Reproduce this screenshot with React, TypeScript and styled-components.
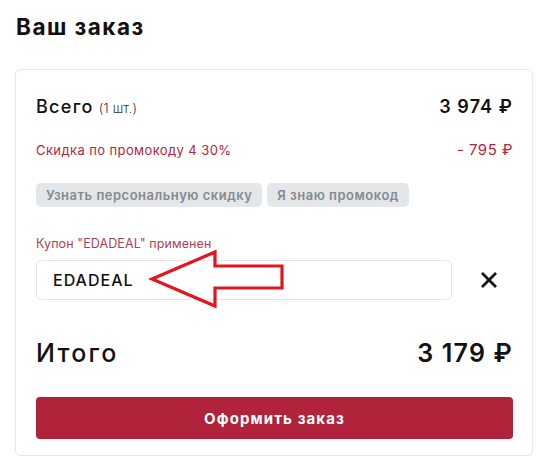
import React from "react";
import styled, { createGlobalStyle } from "styled-components";

const Global = createGlobalStyle`
  html, body { margin: 0; padding: 0; background: #ffffff; }
  body { font-family: Inter, "Noto Sans", "Liberation Sans", sans-serif; color: #111; }
  * { box-sizing: border-box; }
`;

const Page = styled.div`
  width: 550px;
  padding: 14px 17px 0 15px;
  display: flex;
  flex-direction: column;
`;

const Title = styled.h1`
  margin: 0 0 0 1px;
  font-size: 22.5px;
  line-height: 26px;
  font-weight: 750;
  letter-spacing: 1.5px;
  color: #111;
`;

const Card = styled.section`
  margin-top: 29px;
  width: 518px;
  border: 1px solid #e7e7e7;
  border-radius: 6px;
  box-shadow: 0 1px 3px rgba(0, 0, 0, 0.04);
  padding: 25px 19px 16px 20px;
  display: flex;
  flex-direction: column;
`;

const Row = styled.div<{ $mt?: number }>`
  display: flex;
  justify-content: space-between;
  align-items: baseline;
  margin-top: ${(p) => p.$mt ?? 0}px;
`;

const Label = styled.span`
  font-size: 18px;
  line-height: 24px;
  font-weight: 500;
  letter-spacing: 1.3px;
`;

const Count = styled.span`
  font-size: 13px;
  font-weight: 300;
  color: #333;
  letter-spacing: 0.2px;
  margin-left: 5px;
`;

const Amount = styled.span`
  font-size: 18px;
  line-height: 24px;
  font-weight: 600;
  letter-spacing: 1.1px;
`;

const Discount = styled.span`
  font-size: 13px;
  line-height: 18px;
  color: #b5253c;
  letter-spacing: 0.4px;
`;

const DiscountAmount = styled.span`
  font-size: 15px;
  line-height: 18px;
  color: #b5253c;
  letter-spacing: 0.5px;
`;

const Chips = styled.div`
  display: flex;
  gap: 5px;
  margin-top: 24px;
`;

const Chip = styled.button`
  height: 24px;
  padding: 0 10px;
  border: none;
  border-radius: 5px;
  background: #e3e7ea;
  color: #858a8f;
  font-family: inherit;
  font-size: 13px;
  font-weight: 600;
  letter-spacing: 0.5px;
  cursor: pointer;
`;

const CouponLabel = styled.div`
  margin-top: 29px;
  font-size: 12.5px;
  line-height: 16px;
  color: #a94457;
  letter-spacing: 0.1px;
`;

const CouponRow = styled.div`
  position: relative;
  display: flex;
  align-items: center;
  margin-top: 8px;
`;

const CouponInput = styled.div`
  flex: 1;
  height: 40px;
  border: 1px solid #e5e5e5;
  border-radius: 5px;
  padding: 0 16px;
  display: flex;
  align-items: center;
  font-size: 16px;
  font-weight: 500;
  letter-spacing: 1px;
  color: #111;
`;

const Close = styled.button`
  width: 48px;
  height: 40px;
  margin-left: 13px;
  border: none;
  background: none;
  padding: 0;
  display: flex;
  align-items: center;
  justify-content: center;
  cursor: pointer;
`;

const Arrow = styled.svg`
  position: absolute;
  left: 112px;
  top: -12px;
  pointer-events: none;
`;

const TotalLabel = styled.span`
  font-size: 25px;
  line-height: 30px;
  font-weight: 500;
  letter-spacing: 2.2px;
`;

const TotalAmount = styled.span`
  font-size: 25px;
  line-height: 30px;
  font-weight: 600;
  letter-spacing: 1.2px;
`;

const Submit = styled.button`
  margin-top: 29px;
  height: 42px;
  width: 100%;
  border: none;
  border-radius: 4px;
  background: #b0233a;
  color: #fff;
  font-family: inherit;
  font-size: 15px;
  font-weight: 700;
  letter-spacing: 1.1px;
  cursor: pointer;
`;

export default function App() {
  return (
    <>
      <Global />
      <Page>
        <Title>Ваш заказ</Title>
        <Card>
          <Row>
            <Label>
              Всего<Count>(1 шт.)</Count>
            </Label>
            <Amount>3 974 ₽</Amount>
          </Row>
          <Row $mt={21}>
            <Discount>Скидка по промокоду 4 30%</Discount>
            <DiscountAmount>- 795 ₽</DiscountAmount>
          </Row>
          <Chips>
            <Chip>Узнать персональную скидку</Chip>
            <Chip>Я знаю промокод</Chip>
          </Chips>
          <CouponLabel>Купон "EDADEAL" применен</CouponLabel>
          <CouponRow>
            <CouponInput>EDADEAL</CouponInput>
            <Close aria-label="Удалить купон">
              <svg width="16" height="16" viewBox="0 0 16 16">
                <path d="M2 2 L14 14 M14 2 L2 14" stroke="#111" strokeWidth="2.8" strokeLinecap="square" />
              </svg>
            </Close>
            <Arrow width="180" height="64" viewBox="0 0 180 64">
              <polygon
                points="4,31 67,4 67,18 134,18 134,40 67,40 67,58"
                fill="none"
                stroke="#e1161e"
                strokeWidth="3.2"
                strokeLinejoin="miter"
              />
            </Arrow>
          </CouponRow>
          <Row $mt={38}>
            <TotalLabel>Итого</TotalLabel>
            <TotalAmount>3 179 ₽</TotalAmount>
          </Row>
          <Submit>Оформить заказ</Submit>
        </Card>
      </Page>
    </>
  );
}
